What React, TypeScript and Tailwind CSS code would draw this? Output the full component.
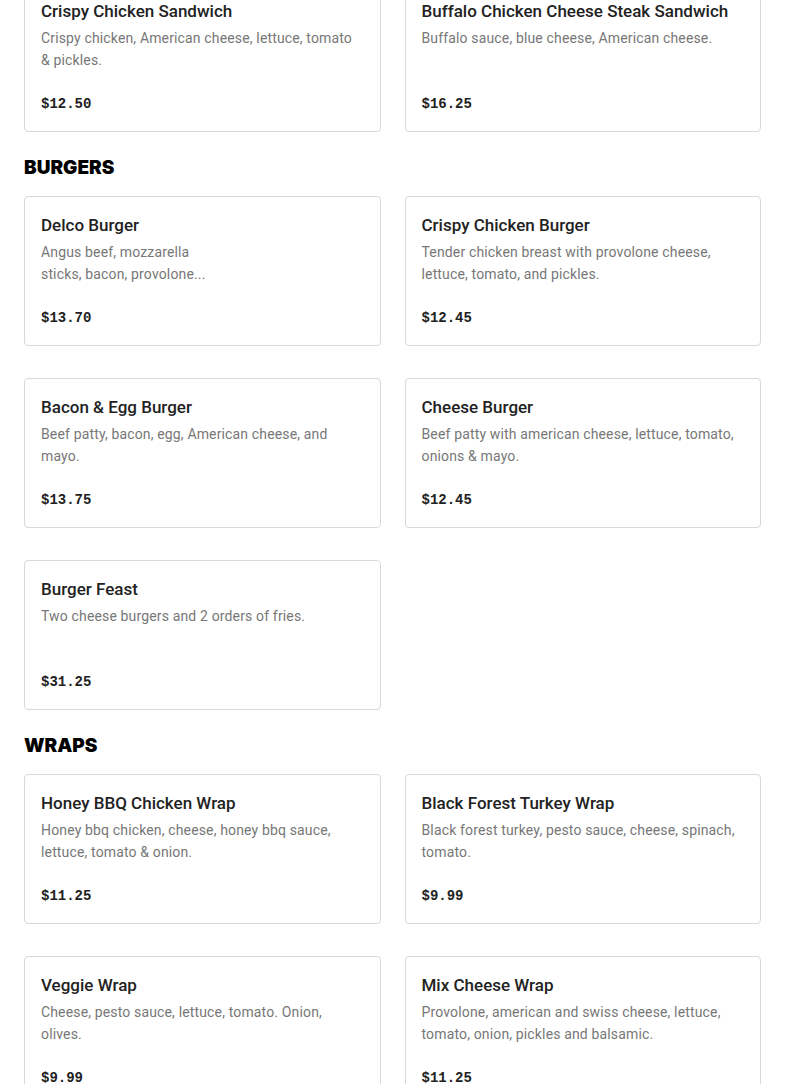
import React from "react";

type Item = { name: string; desc: string[]; price: string };

const top: Item[] = [
  { name: "Crispy Chicken Sandwich", desc: ["Crispy chicken, American cheese, lettuce, tomato & pickles."], price: "$12.50" },
  { name: "Buffalo Chicken Cheese Steak Sandwich", desc: ["Buffalo sauce, blue cheese, American cheese."], price: "$16.25" },
];

const burgers: Item[] = [
  { name: "Delco Burger", desc: ["Angus beef, mozzarella", "sticks, bacon, provolone..."], price: "$13.70" },
  { name: "Crispy Chicken Burger", desc: ["Tender chicken breast with provolone cheese, lettuce, tomato, and pickles."], price: "$12.45" },
  { name: "Bacon & Egg Burger", desc: ["Beef patty, bacon, egg, American cheese, and mayo."], price: "$13.75" },
  { name: "Cheese Burger", desc: ["Beef patty with american cheese, lettuce, tomato, onions & mayo."], price: "$12.45" },
  { name: "Burger Feast", desc: ["Two cheese burgers and 2 orders of fries."], price: "$31.25" },
];

const wraps: Item[] = [
  { name: "Honey BBQ Chicken Wrap", desc: ["Honey bbq chicken, cheese, honey bbq sauce, lettuce, tomato & onion."], price: "$11.25" },
  { name: "Black Forest Turkey Wrap", desc: ["Black forest turkey, pesto sauce, cheese, spinach, tomato."], price: "$9.99" },
  { name: "Veggie Wrap", desc: ["Cheese, pesto sauce, lettuce, tomato. Onion, olives."], price: "$9.99" },
  { name: "Mix Cheese Wrap", desc: ["Provolone, american and swiss cheese, lettuce, tomato, onion, pickles and balsamic."], price: "$11.25" },
];

function Card({ item }: { item: Item }) {
  return (
    <div className="h-[150px] border border-[#d9d9d9] rounded-[4px] pl-4 pr-[18px] pt-[16px] pb-[16px] flex flex-col justify-between bg-white">
      <div>
        <div className="font-['Roboto',sans-serif] text-[17px] leading-[24px] font-medium text-[#222222] whitespace-nowrap overflow-hidden">
          {item.name}
        </div>
        <div className="mt-[4px] font-['Roboto',sans-serif] text-[14px] leading-[22px] text-[#777777] tracking-[0.15px]">
          {item.desc.map((d, i) => (
            <div key={i}>{d}</div>
          ))}
        </div>
      </div>
      <div className="font-['Liberation_Mono',monospace] font-bold text-[14px] leading-[22px] text-[#222222]">
        {item.price}
      </div>
    </div>
  );
}

function Grid({ items }: { items: Item[] }) {
  return (
    <div className="grid grid-cols-2 gap-x-6 gap-y-8">
      {items.map((it) => (
        <Card key={it.name} item={it} />
      ))}
    </div>
  );
}

function Heading({ children }: { children: React.ReactNode }) {
  return (
    <h2 className="pt-[25px] pb-[17px] font-['Inter',sans-serif] text-[19px] leading-[22px] font-black text-black">
      {children}
    </h2>
  );
}

export default function App() {
  return (
    <div className="bg-white min-h-screen overflow-hidden">
      <div className="px-6 -mt-[18px] pb-10">
        <Grid items={top} />
        <Heading>BURGERS</Heading>
        <Grid items={burgers} />
        <Heading>WRAPS</Heading>
        <Grid items={wraps} />
      </div>
    </div>
  );
}
